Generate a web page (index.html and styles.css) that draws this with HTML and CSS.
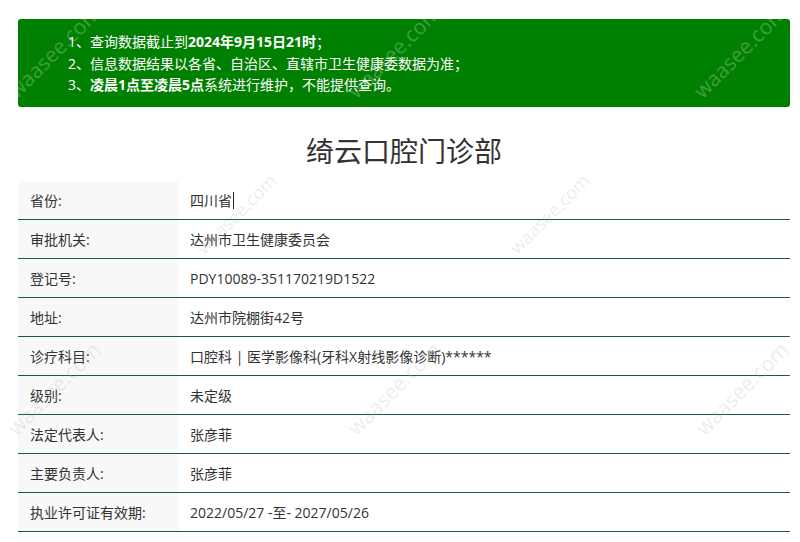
FILE: index.html
```html
<!DOCTYPE html>
<html lang="zh-CN">
<head>
<meta charset="utf-8">
<title>绮云口腔门诊部</title>
<link rel="stylesheet" href="styles.css">
</head>
<body>
<div class="page">
  <div class="notice">
    <p>1、查询数据截止到<b>2024年9月15日21时</b>；</p>
    <p>2、信息数据结果以各省、自治区、直辖市卫生健康委数据为准；</p>
    <p>3、<b>凌晨1点至凌晨5点</b>系统进行维护，不能提供查询。</p>
  </div>
  <h1 class="title">绮云口腔门诊部</h1>
  <div class="info">
    <div class="row"><div class="label">省份:</div><div class="value">四川省<span class="caret"></span></div></div>
    <div class="row"><div class="label">审批机关:</div><div class="value">达州市卫生健康委员会</div></div>
    <div class="row"><div class="label">登记号:</div><div class="value">PDY10089-351170219D1522</div></div>
    <div class="row"><div class="label">地址:</div><div class="value">达州市院棚街42号</div></div>
    <div class="row"><div class="label">诊疗科目:</div><div class="value">口腔科 | 医学影像科(牙科X射线影像诊断)******</div></div>
    <div class="row"><div class="label">级别:</div><div class="value">未定级</div></div>
    <div class="row"><div class="label">法定代表人:</div><div class="value">张彦菲</div></div>
    <div class="row"><div class="label">主要负责人:</div><div class="value">张彦菲</div></div>
    <div class="row"><div class="label">执业许可证有效期:</div><div class="value">2022/05/27 -至- 2027/05/26</div></div>
  </div>
</div>
<div class="wm wm-light w1">waasee.com</div>
<div class="wm wm-light w2">waasee.com</div>
<div class="wm wm-light w3">waasee.com</div>
<div class="wm small w4">waasee.com</div>
<div class="wm small w5">waasee.com</div>
<div class="wm w6">waasee.com</div>
<div class="wm w7">waasee.com</div>
<div class="wm w8">waasee.com</div>
</body>
</html>
```
FILE: styles.css
```css
html, body {
  margin: 0;
  padding: 0;
  background: #fff;
}
body {
  font-family: "Open Sans", "Noto Sans CJK SC", sans-serif;
  color: #333;
  font-size: 14px;
  overflow: hidden;
  position: relative;
  height: 542px;
}
.page {
  padding: 19px 10px 0 18px;
  width: 772px;
}
.notice {
  background: #008000;
  border-radius: 3px;
  color: #fff;
  padding: 12px 20px 12px 50px;
  height: 64px;
}
.notice p {
  margin: 0;
  line-height: 21.5px;
  font-size: 14px;
}
.notice b {
  font-weight: 700;
}
.title {
  margin: 23px 0 11px;
  text-align: center;
  font-size: 28px;
  line-height: 40px;
  font-weight: 400;
  color: #333;
  font-family: "Noto Sans CJK SC", sans-serif;
}
.info {
  display: flex;
  flex-direction: column;
}
.row {
  display: flex;
  height: 38px;
  border-bottom: 1px solid #1b5a3a;
}
.label {
  width: 148px;
  padding-left: 12px;
  background: #f8f8f8;
  display: flex;
  align-items: center;
}
.value {
  flex: 1;
  padding-left: 12px;
  display: flex;
  align-items: center;
}
.caret {
  display: inline-block;
  width: 1px;
  height: 17px;
  background: #222;
  margin-left: 1px;
}
.wm {
  position: absolute;
  width: 116px;
  height: 22px;
  line-height: 22px;
  text-align: center;
  font-family: "Open Sans", sans-serif;
  font-size: 21px;
  color: rgba(170, 170, 170, 0.22);
  transform: rotate(-45deg);
  transform-origin: center center;
  white-space: nowrap;
  pointer-events: none;
}
.wm.small {
  width: 100px;
  height: 20px;
  line-height: 20px;
  font-size: 18px;
}
.wm-light {
  color: rgba(255, 255, 255, 0.25);
}
.w1 { left: -6px; top: 42px; }
.w2 { left: 334px; top: 42px; }
.w3 { left: 680px; top: 42px; }
.w4 { left: 185px; top: 205px; }
.w5 { left: 498px; top: 205px; }
.w6 { left: -6px; top: 379px; }
.w7 { left: 334px; top: 379px; }
.w8 { left: 682px; top: 379px; }
```
